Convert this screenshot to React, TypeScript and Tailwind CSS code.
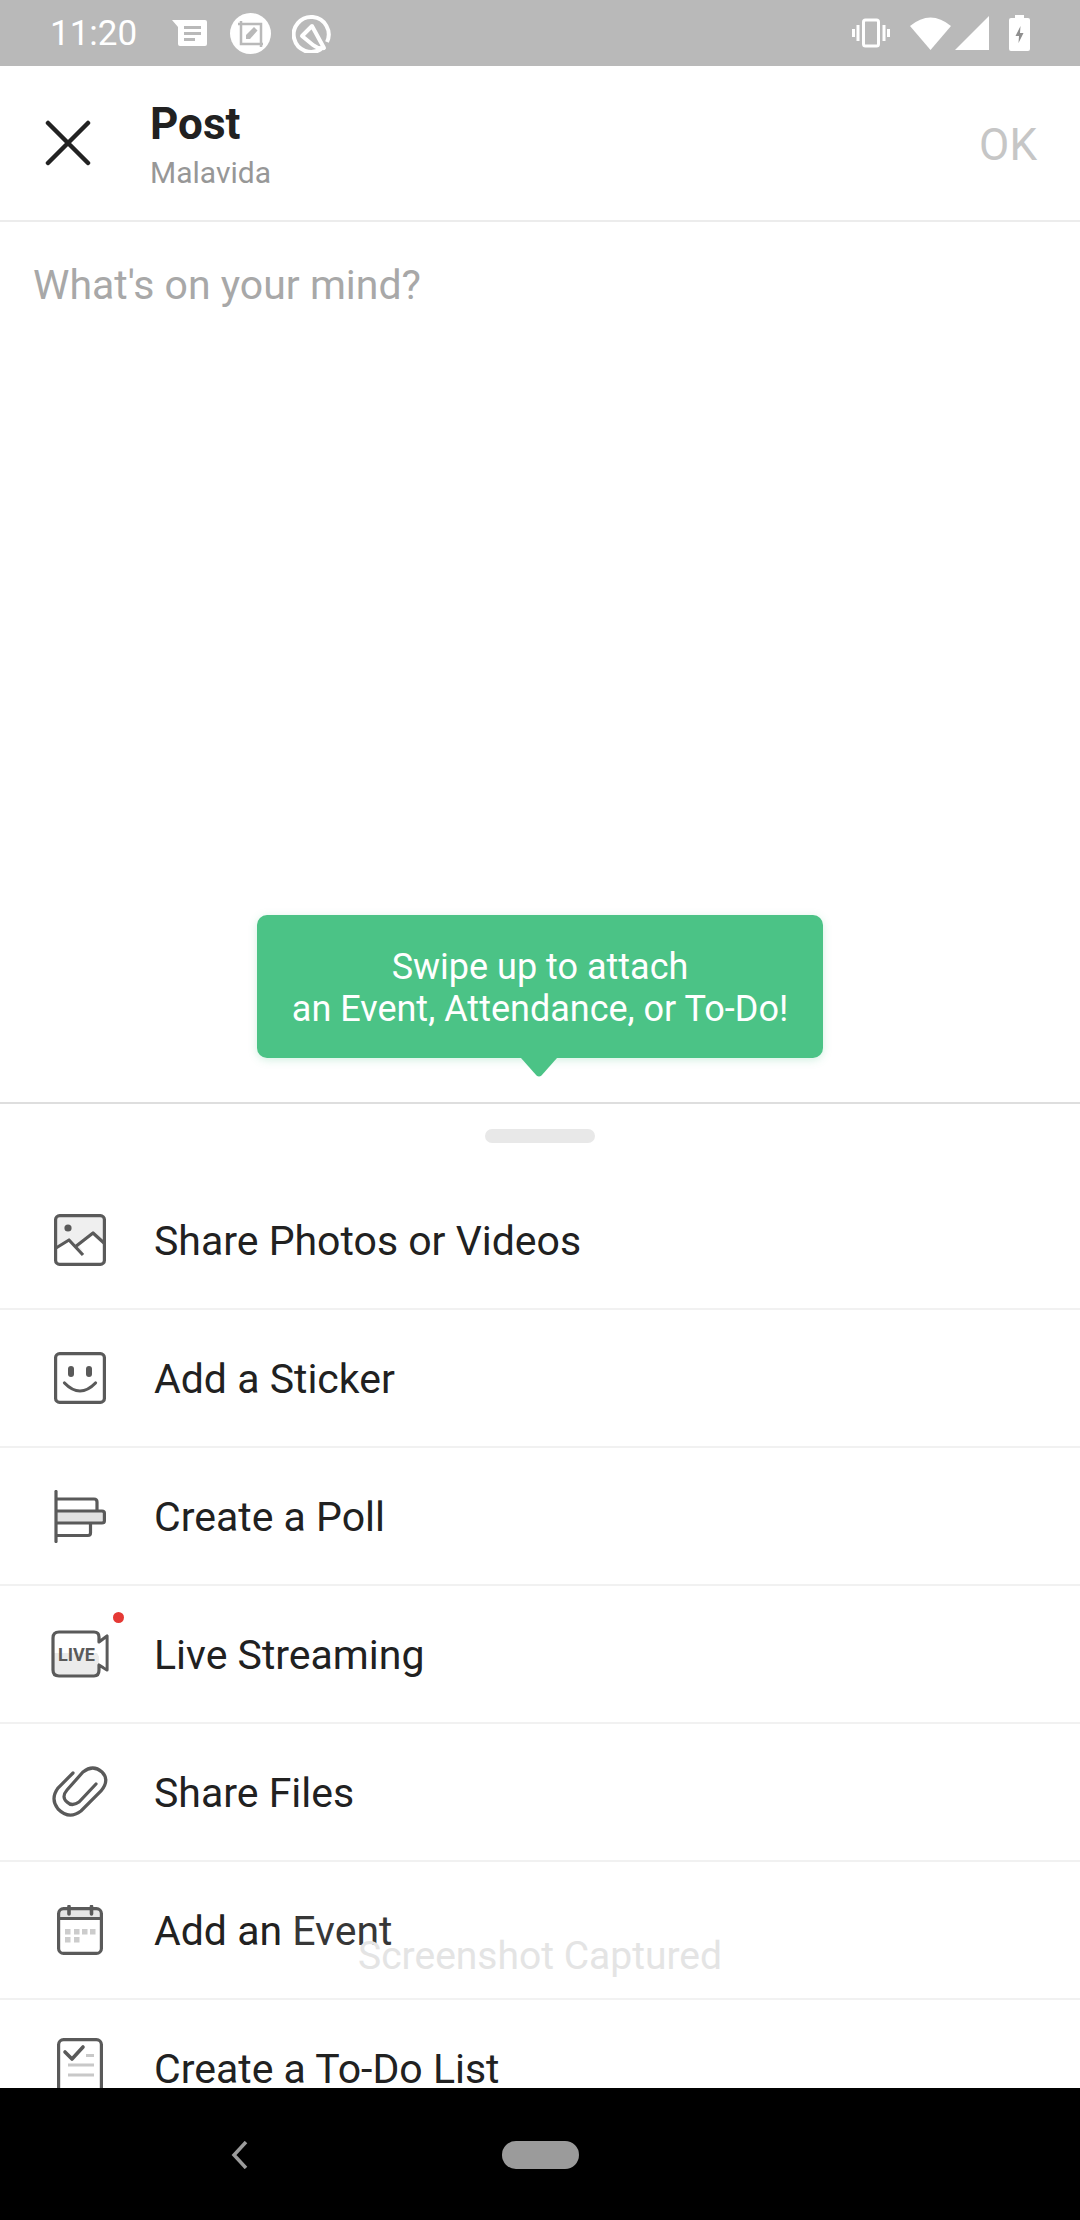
const Photo = () => (
  <svg width="52" height="52" viewBox="0 0 52 52" fill="none" stroke="#5a5a5a" strokeWidth="3.2">
    <path d="M3 33 L3 4 Q3 3 4 3 L48 3 Q49 3 49 4 L49 28 L39 19 L25 31 L29 38 L15 27 Z" fill="#efefef" stroke="none" />
    <rect x="1.6" y="1.6" width="48.8" height="48.8" rx="4" />
    <path d="M2 34 L15 26 L29 41 M21 33 L39 19 L50 29" strokeLinejoin="round" />
    <circle cx="14" cy="14" r="3.6" fill="#5a5a5a" stroke="none" />
  </svg>
);
const Smile = () => (
  <svg width="52" height="52" viewBox="0 0 52 52" fill="none" stroke="#5a5a5a" strokeWidth="3.2">
    <rect x="1.6" y="1.6" width="48.8" height="48.8" rx="4" />
    <rect x="14" y="14" width="6" height="11" rx="3" fill="#5a5a5a" stroke="none" />
    <rect x="32" y="14" width="6" height="11" rx="3" fill="#5a5a5a" stroke="none" />
    <path d="M10.5 31 Q26 47 41.5 31" strokeLinecap="round" />
  </svg>
);
const Poll = () => (
  <svg width="52" height="53" viewBox="0 0 52 53" fill="none" stroke="#5a5a5a" strokeWidth="3.2">
    <path d="M2 21 H50 V33 H2 Z" fill="#e2e2e2" stroke="none" />
    <path d="M2 9 H40 Q43 9 43 12 V21 M2 21 H48 Q50.4 21 50.4 23 V31 Q50.4 33 48 33 H2 M36.5 33 V43 Q36.5 45.5 34 45.5 H2" />
    <path d="M2 1.5 V51.5" strokeLinecap="round" />
  </svg>
);
const Live = () => (
  <svg width="58" height="48" viewBox="0 0 58 48" fill="none" stroke="#5a5a5a" strokeWidth="3.2">
    <path d="M2 23 H48 V46 H2 Z" fill="#ebebeb" stroke="none" />
    <path d="M8 2 H43 Q48 2 48 7 V12 L56 6 V40 L48 35 V40 Q48 46 43 46 H8 Q2 46 2 40 V8 Q2 2 8 2 Z" strokeLinejoin="round" />
    <path d="M54.4 9 L46 23 L54.4 38 Z" fill="#fff" stroke="none" />
    <text x="7" y="31" fontFamily="Roboto" fontWeight="700" fontSize="18" fill="#5a5a5a" stroke="none">LIVE</text>
  </svg>
);
const Clip = () => (
  <svg width="56" height="52" viewBox="0 0 56 52" fill="none" stroke="#5a5a5a" strokeWidth="3.2" strokeLinecap="round">
    <path d="M21 7 L6 22 Q-2 33 6 43 Q17 54 29 45 L49 25 Q58 14 50 6 Q41 -2 31 6 L15 24 Q9 31 15 36 Q20 41 27 36 L44 18" />
  </svg>
);
const Calendar = () => (
  <svg width="46" height="50" viewBox="0 0 46 50" fill="none" stroke="#5a5a5a" strokeWidth="3.2">
    <path d="M3 5 H43 V13 H3 Z" fill="#e6e6e6" stroke="none" />
    <rect x="1.6" y="3.6" width="42.8" height="44.8" rx="5" />
    <path d="M2 13.5 H44" strokeWidth="3.2" />
    <path d="M12 1.5 V9 M34.5 1.5 V9" strokeLinecap="round" strokeWidth="3.6" />
    <path d="M8 24 h5.5 v5.5 h-5.5 z M17 24 h5.5 v5.5 h-5.5 z M25 24 h5.5 v5.5 h-5.5 z M33 24 h5.5 v5.5 h-5.5 z M8 32 h5.5 v5.5 h-5.5 z M17 32 h5.5 v5.5 h-5.5 z" fill="#cccccc" stroke="none" />
  </svg>
);
const Todo = () => (
  <svg width="46" height="60" viewBox="0 0 46 60" fill="none" stroke="#5a5a5a" strokeWidth="3.2">
    <rect x="1.6" y="1.6" width="42.8" height="56" rx="5" />
    <path d="M8 14 L15 21 L26 9" strokeLinejoin="round" strokeLinecap="round" strokeWidth="3.6" />
    <path d="M29 17.5 H37 M11 27 H37 M11 37 H37" stroke="#c8c8c8" strokeWidth="3" />
  </svg>
);

const rows: [string, JSX.Element, boolean?][] = [
  ["Share Photos or Videos", <Photo />],
  ["Add a Sticker", <Smile />],
  ["Create a Poll", <Poll />],
  ["Live Streaming", <Live />, true],
  ["Share Files", <Clip />],
  ["Add an Event", <Calendar />],
  ["Create a To-Do List", <Todo />],
];

export default function App() {
  return (
    <div className="relative flex h-[2220px] w-[1080px] flex-col overflow-hidden bg-white font-['Roboto',sans-serif]">
      <div className="flex h-[66px] shrink-0 items-center justify-between bg-[#b9b9b9] pl-[50px] pr-[50px] text-white">
        <div className="flex items-center">
          <span className="text-[35px] leading-none">11:20</span>
          <div className="ml-[35px] flex items-center">
            <svg width="35" height="28" viewBox="0 0 35 28">
              <path d="M0 1 H33 Q35 1 35 3 V25 Q35 27 33 27 H8 Q6 27 6 25 V8 Z" fill="#fff" />
              <path d="M12 8.5 H29 M12 14.5 H29 M12 20.5 H23" stroke="#b9b9b9" strokeWidth="3" />
            </svg>
            <svg className="ml-[23px]" width="41" height="41" viewBox="0 0 41 41">
              <circle cx="20.5" cy="20.5" r="20.5" fill="#fff" />
              <path d="M11 8 V31 H33 M8 11 H31 V34" fill="none" stroke="#b9b9b9" strokeWidth="2.5" />
              <path d="M16 26 L16 22 L24 14 L27.5 17.5 L20 26 Z" fill="#b9b9b9" />
            </svg>
            <svg className="ml-[21px]" width="39" height="39" viewBox="0 0 39 39" fill="none" stroke="#fff" strokeWidth="4">
              <path d="M29 35 A17.5 17.5 0 1 1 35 28" />
              <path d="M10 22 L20 12 L32 34 Q26 35 21 31 Z" strokeLinejoin="round" />
            </svg>
          </div>
        </div>
        <div className="flex items-center">
          <svg width="38" height="30" viewBox="0 0 38 30" fill="none" stroke="#fff">
            <rect x="11.5" y="2" width="15" height="26" rx="2" strokeWidth="3" />
            <path d="M6 7 V23 M1.5 11 V19 M32 7 V23 M36.5 11 V19" strokeWidth="3" />
          </svg>
          <svg className="ml-[20px]" width="41" height="34" viewBox="0 0 41 34">
            <path d="M0 10 Q20.5 -7 41 10 L20.5 34 Z" fill="#fff" />
          </svg>
          <svg className="ml-[4px]" width="34" height="34" viewBox="0 0 34 34">
            <path d="M0 34 L34 0 V34 Z" fill="#fff" />
          </svg>
          <svg className="ml-[20px]" width="21" height="36" viewBox="0 0 21 36">
            <path d="M6 0 H15 V3 H19 Q21 3 21 5 V34 Q21 36 19 36 H2 Q0 36 0 34 V5 Q0 3 2 3 H6 Z" fill="#fff" />
            <path d="M11.5 11 L6.5 21 H10 L9.5 28 L14.5 18 H11 Z" fill="#8f8f8f" />
          </svg>
        </div>
      </div>

      <div className="flex h-[156px] shrink-0 items-center border-b-2 border-[#ececec]">
        <svg className="ml-[45px]" width="46" height="46" viewBox="0 0 46 46" stroke="#222" strokeWidth="4.5" strokeLinecap="round">
          <path d="M3 3 L43 43 M43 3 L3 43" />
        </svg>
        <div className="ml-[59px] flex flex-col pt-[4px]">
          <span className="text-[44px] font-bold leading-[50px] text-[#212121]">Post</span>
          <span className="mt-[6px] text-[30px] leading-[36px] text-[#979797]">Malavida</span>
        </div>
        <span className="ml-auto mr-[43px] mt-[3px] text-[44px] text-[#c6c6c6]">OK</span>
      </div>

      <div className="relative h-[882px] shrink-0 border-b-2 border-[#dedede] pl-[33px] pt-[40px]">
        <p className="text-[41px] leading-[46px] text-[#a8a8a8]">What's on your mind?</p>
        <div className="absolute left-[257px] top-[693px] flex h-[143px] w-[566px] flex-col items-center justify-center rounded-[10px] bg-[#4bc386] pt-[2px] text-[36px] leading-[42px] text-white shadow-[0_2px_8px_rgba(75,195,134,0.25)]">
          <span>Swipe up to attach</span>
          <span>an Event, Attendance, or To-Do!</span>
          <svg className="absolute left-[263px] top-[143px]" width="38" height="19" viewBox="0 0 38 19">
            <path d="M1 0 H37 L21.5 17.5 Q19 19.5 16.5 17.5 Z" fill="#4bc386" />
          </svg>
        </div>
      </div>

      <div className="relative min-h-0 flex-1 overflow-hidden">
        <div className="flex h-[68px] justify-center pt-[25px]">
          <div className="h-[14px] w-[110px] rounded-full bg-[#e8e8e8]" />
        </div>
        {rows.map(([label, icon, dot]) => (
          <div key={label} className="flex h-[138px] items-center border-b-2 border-[#f1f1f1]">
            <div className="relative ml-[40px] flex w-[80px] shrink-0 justify-center">
              {icon}
              {dot && <div className="absolute left-[73px] top-[-18px] h-[11px] w-[11px] rounded-full bg-[#e53935]" />}
            </div>
            <span className="ml-[34px] mt-[3px] text-[41px] leading-none text-[#212121]">{label}</span>
          </div>
        ))}
      </div>

      <div className="flex h-[132px] shrink-0 bg-black">
        <svg className="ml-[231px] mt-[53px]" width="17" height="28" viewBox="0 0 17 28" fill="none" stroke="#9b9b9b" strokeWidth="3.5">
          <path d="M15 1 L3 14 L15 27" />
        </svg>
        <div className="ml-[254px] mt-[53px] h-[28px] w-[77px] rounded-[14px] bg-[#9b9b9b]" />
      </div>

      <div className="absolute left-[293px] top-[1893px] flex h-[124px] w-[494px] items-center justify-center rounded-[40px] bg-white/10">
        <span className="mt-[2px] text-[39px] text-[#e4e4e4]">Screenshot Captured</span>
      </div>
    </div>
  );
}
